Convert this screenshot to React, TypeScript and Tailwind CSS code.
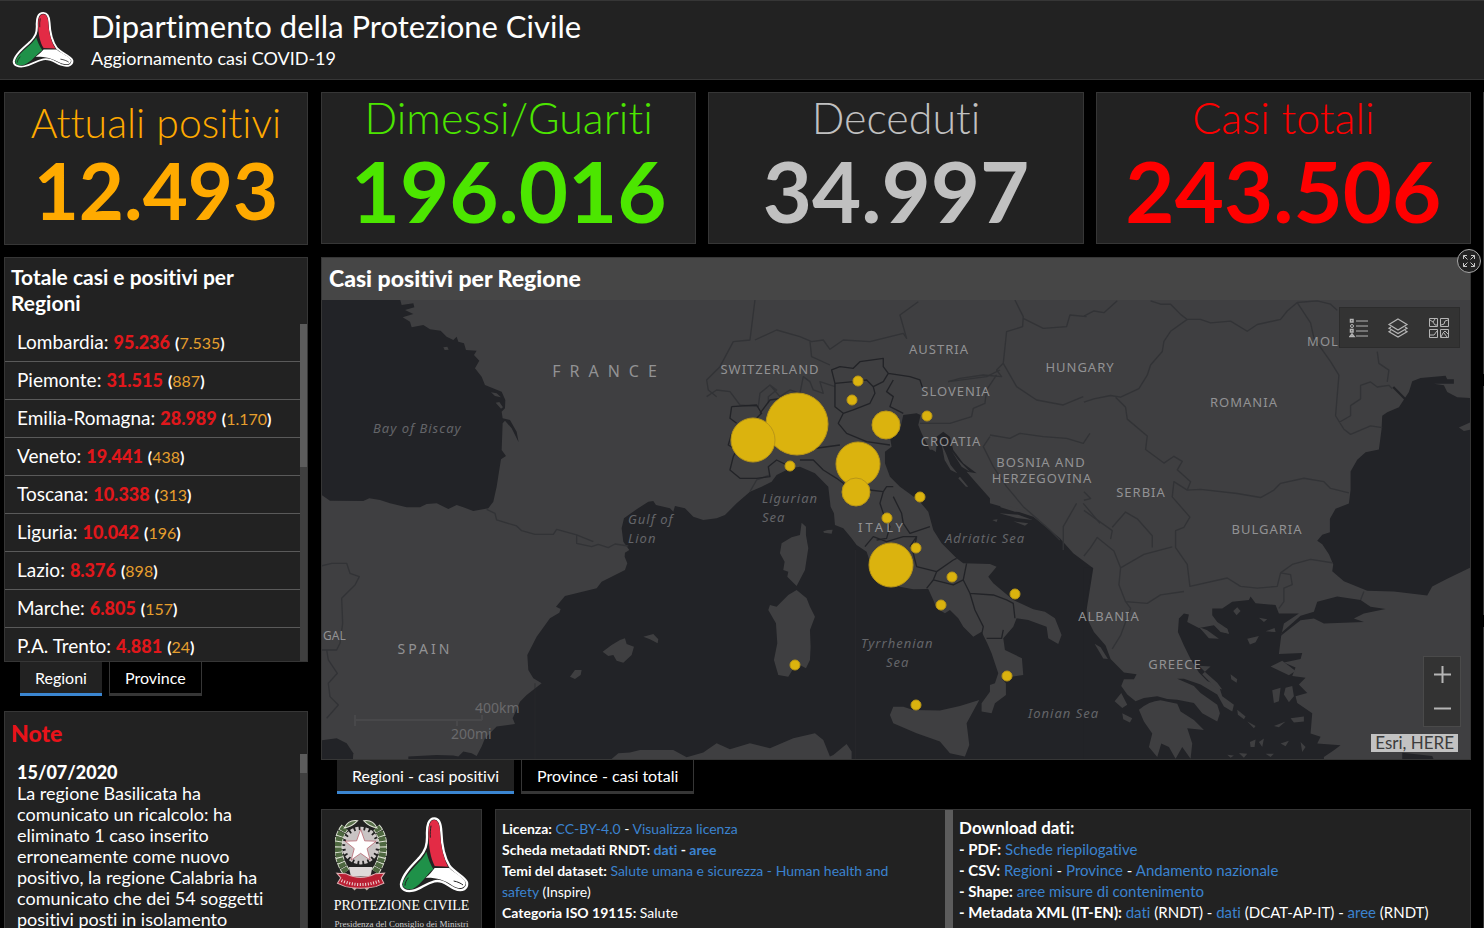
import clsx from "clsx";
import type { ReactNode } from "react";

const stats = [
  { label: "Dimessi/Guariti", value: "196.016", tone: "text-[#4ce600]" },
  { label: "Deceduti", value: "34.997", tone: "text-[#c0c0c0]" },
  { label: "Casi totali", value: "243.506", tone: "text-[#ff0000]" },
];

const regions = [
  ["Lombardia", "95.236", "7.535"],
  ["Piemonte", "31.515", "887"],
  ["Emilia-Romagna", "28.989", "1.170"],
  ["Veneto", "19.441", "438"],
  ["Toscana", "10.338", "313"],
  ["Liguria", "10.042", "196"],
  ["Lazio", "8.376", "898"],
  ["Marche", "6.805", "157"],
  ["P.A. Trento", "4.881", "24"],
];

const bubbles = [
  [797, 424, 31],
  [753, 440, 22],
  [858, 464, 22],
  [856, 492, 14],
  [886, 425, 14],
  [891, 565, 22],
  [858, 381, 5],
  [852, 400, 5],
  [927, 416, 5],
  [790, 466, 5],
  [920, 497, 5],
  [887, 518, 5],
  [916, 548, 5],
  [952, 577, 5],
  [941, 605, 5],
  [1015, 594, 5],
  [795, 665, 5],
  [1007, 676, 5],
  [916, 705, 5],
];

const countries: [string, number, number][] = [
  ["SWITZERLAND", 770, 374],
  ["AUSTRIA", 939, 354],
  ["HUNGARY", 1080, 372],
  ["SLOVENIA", 956, 396],
  ["ROMANIA", 1244, 407],
  ["CROATIA", 951, 446],
  ["BOSNIA AND", 1041, 467],
  ["HERZEGOVINA", 1042, 483],
  ["SERBIA", 1141, 497],
  ["BULGARIA", 1267, 534],
  ["ALBANIA", 1109, 621],
  ["GREECE", 1175, 669],
  ["MOL", 1323, 346],
];

const seas: [string, number, number][] = [
  ["Bay of Biscay", 373, 433],
  ["Gulf of", 628, 524],
  ["Lion", 628, 543],
  ["Ligurian", 762, 503],
  ["Sea", 762, 522],
  ["Adriatic Sea", 945, 543],
  ["Tyrrhenian", 861, 648],
  ["Sea", 886, 667],
  ["Ionian Sea", 1028, 718],
];

function Panel({ className, children }: { className?: string; children: ReactNode }) {
  return <section className={clsx("border border-[#363636] bg-[#222222]", className)}>{children}</section>;
}

function Tabs({ items }: { items: string[] }) {
  return (
    <div role="tablist" className="flex h-[34px] shrink-0 gap-[7px] pl-4 text-base">
      {items.map((item, i) => (
        <button
          key={item}
          role="tab"
          aria-selected={i === 0}
          className={clsx(
            "h-[34px] px-[15px]",
            i === 0
              ? "border-b-[3px] border-[#3b86d1] bg-[#222222]"
              : "border border-t-0 border-b-[3px] border-[#363636] bg-black",
          )}
        >
          {item}
        </button>
      ))}
    </div>
  );
}

function A({ children }: { children: ReactNode }) {
  return (
    <a href="#" className="text-[#3b82cf]">
      {children}
    </a>
  );
}

function TriangleLogo({ className }: { className?: string }) {
  return (
    <svg viewBox="234 34 210 228" preserveAspectRatio="none" className={className} aria-hidden="true">
      <path
        d="M340 38C322 38 317 60 318 88C319 118 314 134 295 156C272 180 245 206 240 235C239 252 256 259 276 255C300 250 312 234 340 227C365 222 378 238 400 249C425 260 441 248 438 230C433 214 400 200 386 181C367 150 362 110 361 78C360 54 355 38 340 38Z"
        fill="#222"
        stroke="#fff"
        strokeWidth="7"
      />
      <path d="M340 43C325 43 322 66 323 95C324 125 328 155 341 181L381 183C364 150 358 110 357 76C356 56 350 43 340 43Z" fill="#e32b45" />
      <path d="M316 138C305 166 260 196 246 230C242 250 262 254 276 249C302 236 318 204 337 190C325 170 321 155 316 138Z" fill="#1f9149" />
      <path d="M341 187L385 187C400 203 430 215 434 232C432 251 412 250 395 240C370 221 342 215 314 216C327 206 334 196 341 187Z" fill="#fff" />
      <path d="M330 60C328 72 327 84 328 96M262 216C256 224 252 232 252 240M398 226C410 228 420 233 426 238" fill="none" stroke="#222" strokeWidth="3" />
    </svg>
  );
}

function Emblem({ className }: { className?: string }) {
  return (
    <svg viewBox="44 38 152 220" className={className} aria-hidden="true">
      <circle cx="119" cy="120" r="48" fill="none" stroke="#cfcaca" strokeWidth="16" strokeDasharray="9 5" />
      <circle cx="119" cy="120" r="46" fill="#c9c4c4" />
      <path d="M72 66C48 92 42 150 76 198M166 66C190 92 196 150 162 198" fill="none" stroke="#dfe3d6" strokeWidth="25" strokeDasharray="15 3" />
      <path d="M72 66C48 92 42 150 76 198M166 66C190 92 196 150 162 198" fill="none" stroke="#4e6840" strokeWidth="20" strokeDasharray="13 3" />
      <path d="M70 68Q82 42 110 46Q94 64 70 68ZM168 68Q156 42 128 46Q144 64 168 68Z" fill="#58704a" stroke="#dfe3d6" strokeWidth="3" />
      <path d="M119 72L131 106L165 107L138 129L147 163L119 143L91 163L100 129L73 107L107 106Z" fill="#fff" stroke="#b0505c" strokeWidth="2" />
      <path d="M84 184H154L148 212H90Z" fill="#ded9d9" />
      <path d="M88 234L104 250M150 234L134 250" stroke="#bdb1a5" strokeWidth="9" />
      <path d="M48 202L76 204Q119 226 162 204L190 202L180 216L188 232L164 242Q119 252 74 242L50 232L60 216Z" fill="#b91f33" stroke="#e0b0b4" strokeWidth="3" />
      <path d="M62 224Q119 248 178 224" fill="none" stroke="#edd" strokeWidth="9" strokeDasharray="3 5" />
    </svg>
  );
}

function RegionMap() {
  return (
    <svg
      viewBox="322 300 1148 459"
      preserveAspectRatio="xMidYMid slice"
      className="absolute inset-0 h-full w-full bg-[#3f3f41] font-['Noto_Sans',sans-serif]"
      role="img"
      aria-label="Casi positivi per Regione"
    >
      <g transform="translate(320 290) scale(.3333)">
        {/* western and central seas */}
        <g fill="#222327">
          <path d="M0 20H238L245 45L280 40L283 52L255 60L280 72L248 82L270 95L275 112L310 105L330 118L362 122L380 140L400 150L410 140L415 155L432 160L438 180L470 182L462 195L478 212L465 235L485 260L495 285L545 305L556 330L555 355L545 365L548 385L570 390L590 425L596 457L575 415L555 392L548 400L545 480L558 498L543 508L530 590L520 635L505 655L460 663L430 652L410 645L385 657L350 640L320 642L300 652L260 652L210 640L180 630L148 625L130 633L30 632L0 612Z" />
          <path d="M0 1352L50 1345L80 1360L100 1390L98 1420H0Z" />
          <path d="M265 1420L265 1400L350 1395L400 1397L415 1400L430 1385L455 1390L470 1398L485 1370L495 1345L530 1310L585 1302L578 1285L600 1235L620 1215L665 1180L640 1165L625 1140L622 1095L650 1040L690 985L718 968L722 957L708 950L735 918L830 895L845 875L915 840L922 820L914 800L915 788L928 780L910 755L905 715L912 685L950 658L985 635L1000 633L1008 645L1050 655L1060 665L1065 648L1095 655L1120 680L1150 690L1190 685L1215 675L1250 640L1290 605L1325 590L1355 575L1370 555L1410 535L1440 530L1485 550L1525 590L1532 650L1542 670L1545 705L1570 715L1595 745L1610 765L1640 785L1655 830L1680 860L1740 890L1780 898L1825 897L1840 930L1850 955L1875 970L1890 960L1915 985L1930 1010L1960 1040L1985 1025L2002 1060L2015 1090L2035 1150L2025 1180L2010 1185L2010 1205L1985 1240L1985 1265L2015 1270L2025 1240L2058 1215L2058 1180L2045 1165L2110 1155L2106 1105L2055 1080L2050 1045L2080 1010L2090 985L2125 990L2180 1010L2185 1045L2215 1062L2225 1035L2205 985L2175 965L2140 958L2080 930L2020 880L2005 860L2030 830L2010 822L1930 820L1910 805L1865 760L1840 720L1825 665L1795 630L1740 590L1710 560L1695 520L1695 485L1715 470L1710 440L1740 420L1750 375L1790 370L1802 375L1795 405L1805 430L1830 480L1840 478L1850 440L1870 425L1890 440L1900 480L1930 520L1970 550L1940 545L1970 580L2010 625L2010 640L2080 660L2140 680L2220 745L2260 790L2320 835L2300 960L2305 1010L2296 1030V1420Z" />
        </g>
        <g fill="#3f3f41">
          <path d="M848 1085L875 1065L900 1050L915 1045L920 1062L942 1070L935 1095L910 1118L890 1112L880 1095L865 1098ZM970 1040L1000 1032L1015 1048L1013 1060L990 1048ZM750 1160L765 1140L785 1140L782 1155L765 1167ZM370 172L382 170L386 179L374 180ZM513 307L530 310L543 322L525 318ZM527 338L538 336L549 352L543 356Z" />
          <path d="M1445 698L1458 710L1458 735L1465 775L1455 840L1430 888L1402 860L1405 845L1390 840L1394 815L1380 790L1385 760L1415 742L1440 735ZM1510 724L1523 720L1538 719L1535 731L1512 728Z" />
          <path d="M1430 900L1460 925L1470 950L1485 980L1470 1020L1472 1070L1470 1110L1458 1135L1430 1120L1405 1160L1375 1155L1362 1110L1372 1060L1368 1000L1345 960L1350 945L1370 950L1405 915Z" />
          <path d="M1710 1275L1720 1250L1750 1250L1780 1260L1860 1262L1920 1248L1978 1230L1940 1300L1948 1365L1935 1400L1890 1390L1860 1355L1790 1330L1720 1300Z" />
          <path d="M860 1420L895 1390L930 1388L960 1380L1060 1380L1100 1402L1150 1388L1190 1360L1230 1378L1290 1360L1350 1375L1420 1345L1485 1330L1510 1350L1530 1400L1540 1395L1580 1362L1595 1385L1595 1420Z" />
          <path d="M1832 455L1850 465L1848 486L1832 476ZM1865 462L1878 490L1892 525L1912 550L1892 540L1874 510ZM1895 483L1915 510L1950 545L1925 530ZM1920 560L1945 590L1938 590L1915 565ZM2040 643L2090 655L2125 665L2085 665L2042 652ZM2038 670L2095 674L2138 690L2090 684ZM2080 694L2125 700L2115 707ZM2017 690L2033 688L2030 696Z" />
        </g>

        {/* Balkans, Aegean and Black Sea */}
        <g transform="translate(2292 -150) scale(1 1.014)">
          <path
            fill="#222327"
            d="M0 968L25 968L10 1050L5 1110L30 1160L65 1200L80 1240L120 1280L158 1285L150 1300L120 1300L112 1320L130 1345L155 1365L180 1355L220 1350L250 1358L280 1360L330 1370L355 1400L400 1425L408 1400L400 1375L350 1340L330 1320L280 1298L300 1298L350 1315L400 1345L420 1380L445 1395L450 1375L415 1350L405 1320L370 1305L345 1280L320 1240L300 1200L282 1160L285 1120L300 1105L315 1108L310 1130L345 1148L390 1140L410 1160L435 1165L430 1150L400 1130L385 1110L385 1090L415 1090L445 1070L495 1065L500 1055L515 1075L575 1080L585 1105L645 1105L600 1135L592 1170L585 1225L655 1222L650 1240L600 1250L635 1265L625 1290L665 1295L645 1315L670 1340L635 1350L640 1370L685 1400L680 1460L710 1470L700 1490L770 1495L750 1510L720 1530V1560H0Z"
          />
          <path
            fill="#222327"
            d="M1170 468L1120 465L1090 450L1080 430L1050 425L1110 425L1110 412L1090 412L1085 402L1010 408L985 418L975 450L945 495L910 510L895 520L893 560L885 620L845 628L820 650L800 685L800 740L795 780L755 795L738 825L738 865L715 872L700 890L715 900L735 930L748 960L745 980L780 1010L850 1038L930 1040L1030 1052L1045 1025L1090 1002L1170 964ZM700 1070L760 1055L830 1065L860 1085L905 1092L840 1105L810 1120L840 1130L720 1135L690 1120L650 1125L605 1160L590 1172L595 1160L650 1112L690 1100Z"
          />
          <path d="M928 435L965 472" stroke="#222327" strokeWidth="7" />
          <g fill="#3f3f41">
            <path d="M165 1390Q195 1365 230 1362L280 1372L290 1395L330 1420L360 1450L310 1445L325 1490L320 1535L295 1500L275 1535L255 1500L232 1490L220 1530L195 1500L205 1460L180 1425Z" />
            <path d="M32 1195L50 1205L72 1240L58 1238ZM92 1365L112 1340L130 1375L115 1385ZM115 1400L145 1415L138 1428L118 1418ZM345 1145L370 1155L405 1180L375 1178ZM395 1135L430 1150L435 1165L410 1158ZM448 1098L460 1087L470 1098L458 1110ZM490 1180L525 1172L515 1190L498 1197ZM525 1118L550 1122L540 1130ZM545 1158L572 1148L575 1160ZM560 1262L595 1245L635 1275L615 1288ZM565 1332L590 1325L585 1365L570 1370ZM605 1325L625 1320L630 1350L615 1368L600 1345ZM440 1285L460 1300L458 1310L442 1300ZM460 1390L485 1410L480 1418L462 1405ZM490 1425L515 1438L510 1445ZM570 1438L605 1425L585 1442ZM620 1415L660 1410L660 1425L630 1428ZM498 1485L515 1478L512 1500L500 1500ZM525 1485L540 1475L535 1500ZM590 1490L615 1482L605 1498ZM650 1485L665 1500L655 1515ZM545 1520L570 1520L560 1530ZM430 1523L450 1525L440 1532ZM465 1518L490 1520L480 1532ZM1125 555L1170 535L1165 560L1140 565ZM380 1262L345 1260L365 1280L400 1310L415 1330L395 1325L355 1285Z" />
          </g>
          <path d="M955 1560V1517L1045 1527L1060 1560Z" fill="#222327" />
          <g fill="none" stroke="#323336" strokeWidth="4" strokeLinejoin="round">
            <path d="M0 225L30 210L60 215L100 180M200 180L230 190L260 190L290 220L310 235L350 235L380 245L440 240L490 270L520 250L590 235L610 210L640 185L700 180L740 190L760 208M640 185L680 245L690 290L740 360L765 400L755 520L780 560L800 575L860 550L895 555M765 540L800 520L800 490L830 470L830 430L860 420L880 435L915 430L925 440M880 330L885 365L915 385L910 420M310 235L260 270L240 300L235 330L200 370L190 400L165 440L110 465L80 460L30 470L0 480M95 465L125 495L130 530L190 580L185 620L240 660L270 640L295 655L280 680L320 715L310 740L350 738L460 750L530 762L570 740L590 720L660 705L720 715L740 735L795 748M310 740L270 715L265 760L318 820L300 850L275 860L275 910L310 960L318 1025L430 1000L470 1025L520 1030L580 1025L590 985L620 990L625 1020L600 1030L600 1070L585 1090M590 985L625 960L680 945L745 955M830 1065L840 1040" />
            <path d="M300 1040L230 1050L190 1075L125 1070L105 1020L110 970L90 920L40 880L20 910L0 935M110 970L180 930L265 908M0 745L20 765L0 770M0 800L85 860L80 885M85 850L125 805L160 825L205 875L205 910M125 1070L140 1090L110 1170L85 1210" />
          </g>
        </g>

        <g fill="none" stroke="#323336" strokeWidth="4" strokeLinejoin="round">
          <path d="M500 658L525 670L530 690L590 708L605 722L645 733L700 733L710 718L770 735L770 760L815 770L835 763L865 773L885 762L925 768M770 735L820 755M3 828L35 820L80 820L90 850L118 860L105 885L65 925L68 1000L60 1060L50 1080H3M20 1080L25 1110L52 1150L25 1180L30 1220L55 1245L20 1285" />
          <path d="M1305 30L1290 150L1240 155L1200 230L1160 270L1165 300L1190 320M1305 150L1370 120L1440 140L1475 155L1510 150L1530 178L1570 150L1650 155L1750 130L1760 145L1740 75L1795 35M2085 30L2110 80L2108 110L2060 125L2050 220L2030 240L2045 260L1990 255L1920 265L1885 275M2110 85L2170 115L2240 110L2250 75L2300 80M2050 220L2090 290L2150 330L2230 345L2290 320M2030 255L2000 300L1995 340L1960 355L1955 380L1890 400L1800 400M1470 155L1475 200L1530 225" />
          <path d="M2010 435L2070 445L2100 430L2170 440L2240 445L2290 460L2310 430M2010 440L1990 470L2020 530L2060 590L2110 650L2190 720L2220 750M2270 640L2230 710L2230 780M2290 640L2340 700" />
          <path d="M1160 320L1190 300L1230 305L1260 345L1315 350L1320 310L1350 285L1370 300L1345 320L1345 340M1350 285L1380 320L1410 300L1440 310L1450 260L1470 275L1480 300L1510 310L1500 275L1545 290M1290 605L1310 570L1350 555M1885 275L2000 260L2040 240" />
        </g>
        <g fill="none" stroke="#222327" strokeWidth="4" strokeLinejoin="round">
          <path d="M1235 350L1310 345L1325 370L1310 385L1330 400M1235 350L1230 385L1250 400M1235 430L1225 465L1250 480L1240 500L1230 540L1260 565L1310 565L1350 560L1345 530L1370 510L1410 530M1320 370L1350 330L1420 320M1450 480L1560 465M1440 510L1480 510L1510 540L1550 565L1570 580L1590 600M1545 280L1535 240L1560 230L1600 235L1620 215L1690 205L1690 230L1705 250L1690 275L1660 290L1640 270L1600 275L1545 280M1545 280L1545 350L1570 370L1600 360L1650 340L1665 310L1660 290M1705 250L1770 260L1800 270L1810 300M1720 270L1700 305L1720 320L1710 350L1750 370M1570 370L1555 400L1580 430L1640 455L1710 465M1650 600L1690 605L1700 590L1720 590M1690 605L1680 640L1690 670L1710 710L1700 745L1670 750M1720 620L1745 670L1750 700L1770 730L1830 710M1635 770L1660 740L1700 755L1750 740L1790 740L1780 790L1790 830L1850 845L1900 810L1910 805M1790 740L1770 770M1850 845L1840 870L1820 895M1840 870L1900 885L1930 870L1940 820M1930 870L1950 910L2020 915L2060 930L2080 940L2085 985M1950 910L1965 960L1990 1010L1985 1035M2000 1045L2045 1045L2050 1020" />
        </g>
        <path d="M645 1180V1410M1607 780V1410" stroke="#292a2e" strokeWidth="2" />
      </g>

      <g fill="#929294" fontSize="13" textAnchor="middle" className="tracking-[1px]">
        {countries.map(([name, x, y]) => (
          <text key={name} x={x} y={y}>{name}</text>
        ))}
        <text x="882" y="532" className="tracking-[3px]">ITALY</text>
        <text x="425" y="654" fontSize="14" className="tracking-[3px]">SPAIN</text>
        <text x="323" y="640" fontSize="12" textAnchor="start" className="tracking-normal">GAL</text>
        <text x="609" y="377" fontSize="16" className="tracking-[9px]">FRANCE</text>
      </g>
      <g fill="#646569" fontSize="13" fontStyle="italic" className="tracking-[1px]">
        {seas.map(([name, x, y]) => (
          <text key={name + y} x={x} y={y}>{name}</text>
        ))}
      </g>
      <path d="M355 715V726M355 720H482M457 720V726M482 715V720" stroke="#48484a" strokeWidth="2" fill="none" />
      <g fill="#6a6a6c" fontSize="14">
        <text x="475" y="713">400km</text>
        <text x="451" y="739">200mi</text>
      </g>
      <g fill="#dbb30e" stroke="#b99617" strokeWidth="1">
        {bubbles.map(([x, y, r]) => (
          <circle key={`${x}-${y}`} cx={x} cy={y} r={r} />
        ))}
      </g>
    </svg>
  );
}

function MapToolbar() {
  return (
    <div className="absolute top-[7px] right-[10px] flex h-[41px] w-[121px] items-center justify-around border border-[#2c2c2c] bg-[#333333] text-[#b5b5b5]">
      <button aria-label="Legenda">
        <svg width="20" height="20" viewBox="0 0 20 20" stroke="currentColor" fill="none">
          <path d="M7 3H19M7 8H19M7 13H19M7 18H19" />
          <path d="M1.500 1.500H4V4H1.500ZM1.500 11.500H4V14H1.500ZM1 18.500H5L3 16Z" strokeWidth="1.500" />
          <circle cx="3" cy="8" r="1.500" />
        </svg>
      </button>
      <button aria-label="Livelli">
        <svg width="22" height="20" viewBox="0 0 22 20" stroke="currentColor" fill="none" strokeWidth="1.200">
          <path d="M11 1L20 6.500L11 12L2 6.500ZM4 9L2 10.200L11 15.500L20 10.200L18 9M4 12.500L2 13.700L11 19L20 13.700L18 12.500" />
        </svg>
      </button>
      <button aria-label="Mappe di base">
        <svg width="22" height="22" viewBox="0 0 22 22" stroke="currentColor" fill="none">
          <path d="M1.500 1.500H9.500V9.500H1.500ZM12.500 1.500H20.500V9.500H12.500ZM1.500 12.500H9.500V20.500H1.500ZM12.500 12.500H20.500V20.500H12.500Z" />
          <path d="M2 3L5 5L7 8H9M7 2L5 5M13 8L16 7L17 4L20 3M2 18H6L9 14M13 20L15 16L17 14L20 17M16 16L19 20" />
        </svg>
      </button>
    </div>
  );
}

export default function App() {
  return (
    <div className="flex h-screen min-w-[1200px] flex-col overflow-hidden bg-black font-['Lato',sans-serif] text-white [font-variant-ligatures:none]">
      <header className="flex h-20 shrink-0 items-center border-y border-[#363636] bg-[#222222] pl-3">
        <TriangleLogo className="h-[56px] w-[62px]" />
        <div className="ml-[17px]">
          <h1 className="text-[31px] leading-9">Dipartimento della Protezione Civile</h1>
          <p className="text-lg leading-7">Aggiornamento casi COVID-19</p>
        </div>
      </header>

      <main className="flex min-h-0 flex-1 gap-[13px] pt-3 pl-1">
        <div className="flex w-[304px] shrink-0 flex-col">
          <Panel className="flex h-[153px] shrink-0 flex-col items-center text-[#ffaa00]">
            <h2 className="text-[41px] leading-[60px] font-light">Attuali positivi</h2>
            <p className="text-[78px] leading-[74px] font-bold">12.493</p>
          </Panel>

          <Panel className="mt-3 flex h-[405px] shrink-0 flex-col">
            <h2 className="shrink-0 pt-1.5 pr-12 pb-2 pl-1.5 text-[21px] leading-[26px] font-bold">
              Totale casi e positivi per Regioni
            </h2>
            <div className="flex min-h-0 flex-1">
              <ul className="flex-1 overflow-hidden">
                {regions.map(([name, total, positive]) => (
                  <li key={name} className="flex h-[38px] items-center gap-[5px] border-b border-[#5a5a5a] pl-3 text-[19px]">
                    <span>{name}:</span>
                    <span className="text-[18px] font-black text-[#e0171b]">{total}</span>
                    <span className="text-base">
                      <b>(</b>
                      <span className="text-[#e69f2d]">{positive}</span>
                      <b>)</b>
                    </span>
                  </li>
                ))}
              </ul>
              <div className="w-[7px] bg-[#3f3f3f]">
                <div className="h-[143px] bg-[#5c5c5c]" />
              </div>
            </div>
          </Panel>
          <Tabs items={["Regioni", "Province"]} />

          <Panel className="mt-[15px] flex min-h-0 flex-1 flex-col border-b-0">
            <h2 className="shrink-0 px-1.5 pt-[7px] text-[23px] leading-7 font-black text-[#e8131a]">Note</h2>
            <div className="mt-[7px] flex min-h-0 flex-1">
              <div className="flex-1 overflow-hidden pt-2 pr-6 pl-3 text-[18px] leading-[21px]">
                <p className="font-black">15/07/2020</p>
                <p>
                  La regione Basilicata ha comunicato un ricalcolo: ha eliminato 1 caso inserito erroneamente come nuovo
                  positivo, la regione Calabria ha comunicato che dei 54 soggetti positivi posti in isolamento
                </p>
              </div>
              <div className="w-[7px] bg-[#3f3f3f]">
                <div className="h-[19px] bg-[#5c5c5c]" />
              </div>
            </div>
          </Panel>
        </div>

        <div className="flex min-w-0 flex-1 flex-col">
          <div className="grid h-[152px] shrink-0 grid-cols-3 gap-3">
            {stats.map((s) => (
              <Panel key={s.label} className={clsx("flex flex-col items-center", s.tone)}>
                <h2 className="text-[43px] leading-[50px] font-light">{s.label}</h2>
                <p className="text-[85px] leading-[94px] font-bold">{s.value}</p>
              </Panel>
            ))}
          </div>

          <Panel className="relative mt-[13px] flex min-h-0 flex-1 flex-col">
            <h2 className="h-[42px] shrink-0 bg-[#464646] px-[7px] text-[23px] leading-10 font-black">
              Casi positivi per Regione
            </h2>
            <button
              aria-label="Espandi"
              className="absolute -top-[9px] -right-[11px] z-10 flex size-6 items-center justify-center rounded-full border border-[#a8a8a8] bg-[#222222]"
            >
              <svg width="14" height="14" viewBox="0 0 14 14" fill="none" stroke="#c8c8c8">
                <path d="M1.500 5V1.500H5M1.500 1.500L5.500 5.500M9 1.500H12.500V5M12.500 1.500L8.500 5.500M1.500 9V12.500H5M1.500 12.500L5.500 8.500M9 12.500H12.500V9M12.500 12.500L8.500 8.500" />
              </svg>
            </button>
            <div className="relative min-h-0 flex-1">
              <RegionMap />
              <MapToolbar />
              <div className="absolute right-[9px] bottom-8 flex h-[71px] w-[38px] flex-col border border-[#4a4a4a] bg-[#333333]">
                {["M0 8.500H17M8.500 0V17", "M0 8.500H17"].map((d, i) => (
                  <button key={d} aria-label={i ? "Riduci" : "Ingrandisci"} className="flex flex-1 items-center justify-center">
                    <svg width="17" height="17" fill="none" stroke="#b5b5b5" strokeWidth="2">
                      <path d={d} />
                    </svg>
                  </button>
                ))}
              </div>
              <p className="absolute right-3 bottom-[7px] bg-[#c2c2c2] px-1 text-[17px] leading-[18px] text-[#3c3c3c]">
                Esri, HERE
              </p>
            </div>
          </Panel>
          <Tabs items={["Regioni - casi positivi", "Province - casi totali"]} />

          <div className="mt-[15px] flex h-[119px] shrink-0 gap-[13px] overflow-hidden">
            <Panel className="flex w-[161px] shrink-0 flex-col items-center overflow-hidden border-b-0 pt-[7px]">
              <div className="flex h-[76px] items-center gap-3">
                <Emblem className="h-[74px] w-[52px]" />
                <TriangleLogo className="h-[76px] w-[70px]" />
              </div>
              <p className="mt-1 font-['Liberation_Serif',serif] text-[14px] leading-[18px] whitespace-nowrap">PROTEZIONE CIVILE</p>
              <p className="font-['Liberation_Serif',serif] text-[9px] leading-[18px] whitespace-nowrap text-[#d0d0d0]">
                Presidenza del Consiglio dei Ministri
              </p>
            </Panel>

            <Panel className="flex min-w-0 flex-1 border-b-0 leading-[21px]">
              <div className="flex-[441] pt-2 pr-10 pl-1.5 text-[14px]">
                <p><b>Licenza:</b> <A>CC-BY-4.0</A> - <A>Visualizza licenza</A></p>
                <p className="font-bold">Scheda metadati RNDT: <A>dati</A> - <A>aree</A></p>
                <p><b>Temi del dataset:</b> <A>Salute umana e sicurezza - Human health and safety</A> (Inspire)</p>
                <p><b>Categoria ISO 19115:</b> Salute</p>
              </div>
              <div className="w-2 shrink-0 bg-[#5c5c5c]" />
              <div className="flex-[559] pt-[7px] pl-1.5 text-[15px]">
                <p className="text-[17px] leading-[22px] font-bold">Download dati:</p>
                <p><b>- PDF:</b> <A>Schede riepilogative</A></p>
                <p><b>- CSV:</b> <A>Regioni</A> - <A>Province</A> - <A>Andamento nazionale</A></p>
                <p><b>- Shape:</b> <A>aree misure di contenimento</A></p>
                <p>
                  <b>- Metadata XML (IT-EN):</b> <A>dati</A> (RNDT) - <A>dati</A> (DCAT-AP-IT) - <A>aree</A> (RNDT)
                </p>
              </div>
            </Panel>
          </div>
        </div>

        <div className="-ml-px flex w-px flex-col gap-3">
          <div className="flex-[281] bg-[#363636]" />
          <div className="flex-[229] bg-[#363636]" />
          <div className="flex-[300] bg-[#363636]" />
        </div>
      </main>
    </div>
  );
}
